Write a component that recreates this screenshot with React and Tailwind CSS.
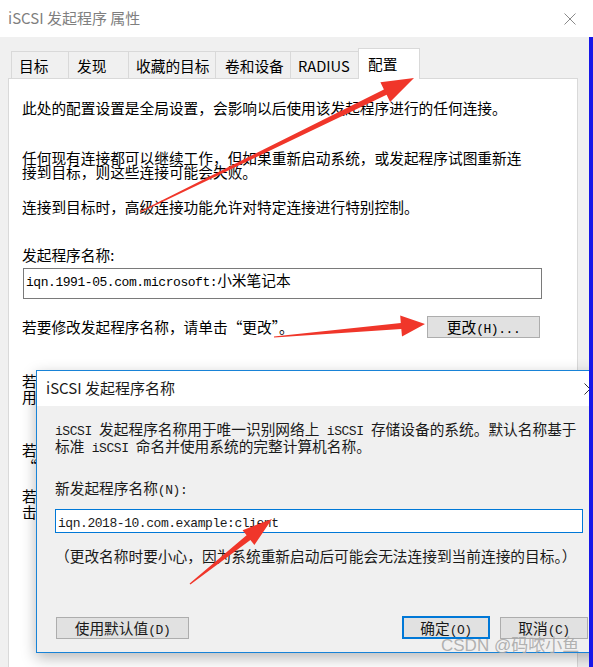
import React from 'react'

// latin runs in the SimSun-like half-width look
function M({ children }) {
  return (
    <span className="whitespace-pre font-['Liberation_Mono',monospace] text-[13px] tracking-[-0.45px]">
      {children}
    </span>
  )
}

const TABS = [
  { label: '目标', cls: 'w-[57px]' },
  { label: '发现', cls: 'w-[60px] pl-[8px]' },
  { label: '收藏的目标', cls: 'w-[87px]' },
  { label: '卷和设备', cls: 'w-[75px] pl-[9px]' },
  { label: 'RADIUS', cls: 'w-[68px]' },
]

function arrowPoints(x1, y1, x2, y2, headLen, headW, shaftW) {
  const dx = x2 - x1
  const dy = y2 - y1
  const len = Math.hypot(dx, dy)
  const ux = dx / len
  const uy = dy / len
  const nx = -uy
  const ny = ux
  const bx = x2 - ux * headLen
  const by = y2 - uy * headLen
  const p = (x, y) => `${x.toFixed(1)},${y.toFixed(1)}`
  return [
    p(x1 + nx * 0.6, y1 + ny * 0.6),
    p(bx + nx * shaftW / 2, by + ny * shaftW / 2),
    p(bx + nx * headW / 2, by + ny * headW / 2),
    p(x2, y2),
    p(bx - nx * headW / 2, by - ny * headW / 2),
    p(bx - nx * shaftW / 2, by - ny * shaftW / 2),
    p(x1 - nx * 0.6, y1 - ny * 0.6),
  ].join(' ')
}

const ARROWS = [
  [140, 212, 414, 78, 32, 22, 6],
  [274, 337, 425, 324, 24, 21, 6],
  [190, 584, 272, 519, 30, 19, 6],
]

function CloseX({ color }) {
  return (
    <svg width="12" height="12" viewBox="0 0 12 12">
      <path d="M0.5 0.5 L11.5 11.5 M11.5 0.5 L0.5 11.5" stroke={color} strokeWidth="1" fill="none" />
    </svg>
  )
}

export default function App() {
  return (
    <div className="relative w-[593px] h-[667px] overflow-hidden bg-[#f0f0f0] text-black font-['Noto_Sans_CJK_SC',sans-serif]">
      {/* window title */}
      <div className="h-[37px] bg-white flex items-center justify-between pl-[8px] pr-[17px]">
        <span className="text-[15px] text-[#7f7f7f]">iSCSI 发起程序 属性</span>
        <CloseX color="#8a8a8a" />
      </div>

      {/* tabs */}
      <div className="mt-[11px] pl-[11px] h-[30px] flex items-end">
        {TABS.map(t => (
          <div key={t.label} className={`h-[27px] pl-[7px] border-l border-t border-[#d9d9d9] bg-[#f0f0f0] text-[14.7px] leading-[27px] whitespace-nowrap ${t.cls}`}>
            {t.label}
          </div>
        ))}
        <div className="relative z-10 -mb-px w-[62px] h-[31px] pl-[9px] border-l border-t border-r border-[#d9d9d9] bg-white text-[14.7px] leading-[30px]">
          配置
        </div>
      </div>

      {/* panel */}
      <div className="ml-[8px] w-[570px] h-[600px] border border-[#d9d9d9] bg-white px-[13px] pt-[22px] text-[14.7px] leading-[14px]">
        <p>此处的配置设置是全局设置，会影响以后使用该发起程序进行的任何连接。</p>
        <p className="mt-[36px]">
          任何现有连接都可以继续工作，但如果重新启动系统，或发起程序试图重新连<br />
          接到目标，则这些连接可能会失败。
        </p>
        <p className="mt-[21px]">连接到目标时，高级连接功能允许对特定连接进行特别控制。</p>

        <p className="mt-[34px]">发起程序名称:</p>
        <div className="mt-[6px] ml-[1px] w-[519px] h-[31px] border border-[#7a7a7a] pl-[2px] pt-[4px] whitespace-nowrap">
          <M>iqn.1991-05.com.microsoft:</M>小米笔记本
        </div>

        <div className="mt-[17px] w-[518px] h-[22px] flex items-center justify-between">
          <span>若要修改发起程序名称，请单击“更改”。</span>
          <button className="w-[113px] h-[22px] border border-[#adadad] bg-[#e1e1e1] text-[14.7px] leading-[20px]">
            更改<M>(H)...</M>
          </button>
        </div>

        <p className="mt-[35px] leading-[16px] whitespace-nowrap">
          若要为发起程序设置 CHAP 机密以便与相互 CHAP 一起使<br />
          用，请单击“CHAP”。
        </p>
        <p className="mt-[37px] leading-[16px] whitespace-nowrap">
          若要设置发起程序的 IPsec 隧道模式地址，请单击<br />
          “IPsec”。
        </p>
        <p className="mt-[14px] leading-[16px] whitespace-nowrap">
          若要生成系统上所有已连接目标和设备的报告，请单<br />
          击“报告”。
        </p>
      </div>

      {/* change name dialog */}
      <div className="absolute left-[36px] top-[370px] z-20 w-[578px] h-[283px] flex flex-col border border-[#1883d7] bg-[#f0f0f0] shadow-[0_5px_14px_rgba(0,0,0,0.28)]">
        <div className="h-[35px] bg-white flex items-center justify-between pl-[9px] pr-[17px]">
          <span className="text-[15px] text-[#1a1a1a]">iSCSI 发起程序名称</span>
          <CloseX color="#333" />
        </div>
        <div className="flex-1 flex flex-col pl-[18px] pt-[16px] pb-[13px] text-[14.7px] leading-[14px] text-[#1a1a1a]">
          <p className="whitespace-nowrap">
            <M>iSCSI </M>发起程序名称用于唯一识别网络上<M> iSCSI </M>存储设备的系统。默认名称基于<br />
            标准<M> iSCSI </M>命名并使用系统的完整计算机名称。
          </p>
          <p className="mt-[25px]">新发起程序名称<M>(N):</M></p>
          <div className="mt-[11px] w-[528px] h-[24px] border border-[#0078d7] bg-white pl-[2px] leading-[22px]">
            <M>iqn.2018-10.com.example:client</M>
          </div>
          <p className="mt-[16px] whitespace-nowrap">（更改名称时要小心，因为系统重新启动后可能会无法连接到当前连接的目标。）</p>

          <div className="mt-auto flex items-center">
            <button className="ml-[1px] w-[133px] h-[22px] border border-[#adadad] bg-[#e1e1e1] leading-[20px]">
              使用默认值<M>(D)</M>
            </button>
            <button className="ml-[213px] w-[88px] h-[23px] border-2 border-[#0078d7] bg-[#e1e1e1] leading-[19px]">
              确定<M>(O)</M>
            </button>
            <button className="ml-[10px] w-[88px] h-[22px] border border-[#adadad] bg-[#e1e1e1] leading-[20px]">
              取消<M>(C)</M>
            </button>
          </div>
        </div>
      </div>

      {/* annotation arrows */}
      <svg className="absolute left-0 top-0 z-30 pointer-events-none" width="593" height="667">
        {ARROWS.map((a, i) => (
          <polygon key={i} points={arrowPoints(...a)} fill="#f0362a" />
        ))}
      </svg>

      {/* watermark */}
      <div className="absolute left-[441px] top-[636px] z-30 text-[17px] leading-[20px] text-[#a8a8a8]/90 whitespace-nowrap font-['Liberation_Sans','Noto_Sans_CJK_SC',sans-serif]">
        CSDN @码哝小鱼
      </div>

      {/* screen edge */}
      <div className="absolute right-0 top-[37px] z-40 w-[4px] h-[630px] bg-[#1717e8]" />
    </div>
  )
}
